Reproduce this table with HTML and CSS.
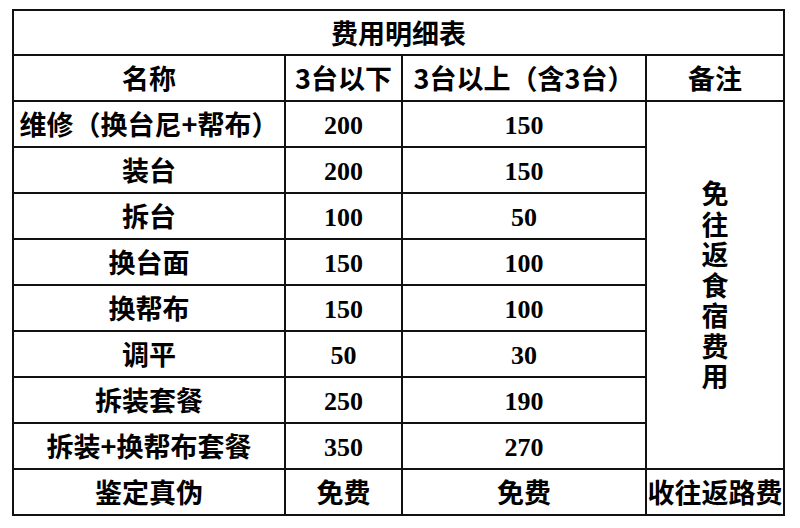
FILE: index.html
```html
<!DOCTYPE html>
<html lang="zh-CN">
<head>
<meta charset="utf-8">
<title>费用明细表</title>
<link rel="stylesheet" href="styles.css">
</head>
<body>
<table class="fee-table">
  <colgroup>
    <col class="c-name">
    <col class="c-low">
    <col class="c-high">
    <col class="c-note">
  </colgroup>
  <tr class="title-row"><td colspan="4">费用明细表</td></tr>
  <tr><td>名称</td><td>3台以下</td><td>3台以上（含3台）</td><td>备注</td></tr>
  <tr><td>维修（换台尼+帮布）</td><td class="num">200</td><td class="num">150</td><td rowspan="8" class="note"><div class="vertical">免往返食宿费用</div></td></tr>
  <tr><td>装台</td><td class="num">200</td><td class="num">150</td></tr>
  <tr><td>拆台</td><td class="num">100</td><td class="num">50</td></tr>
  <tr><td>换台面</td><td class="num">150</td><td class="num">100</td></tr>
  <tr><td>换帮布</td><td class="num">150</td><td class="num">100</td></tr>
  <tr><td>调平</td><td class="num">50</td><td class="num">30</td></tr>
  <tr><td>拆装套餐</td><td class="num">250</td><td class="num">190</td></tr>
  <tr><td>拆装+换帮布套餐</td><td class="num">350</td><td class="num">270</td></tr>
  <tr><td>鉴定真伪</td><td>免费</td><td>免费</td><td>收往返路费</td></tr>
</table>
</body>
</html>
```

FILE: styles.css
```css
html, body {
  margin: 0;
  padding: 0;
  background: #fff;
}

body {
  padding: 9px 0 0 12px;
  font-family: "Noto Sans CJK SC", "Noto Sans", sans-serif;
  font-weight: 700;
  font-size: 27px;
  color: #000;
}

.fee-table {
  border-collapse: collapse;
  table-layout: fixed;
  width: 773px;
}

.c-name { width: 272px; }
.c-low { width: 117px; }
.c-high { width: 244px; }
.c-note { width: 138px; }

.fee-table td {
  border: 2px solid #111;
  padding: 0;
  height: 44px;
  text-align: center;
  vertical-align: middle;
  line-height: 30px;
  white-space: nowrap;
  overflow: hidden;
}

.fee-table .title-row td {
  height: 43px;
}

.fee-table td.num {
  font-family: "Liberation Serif", "DejaVu Serif", serif;
  font-size: 26px;
  padding-top: 4px;
  height: 40px;
}

.fee-table td.note {
  white-space: normal;
}

.vertical {
  width: 1em;
  margin: 0 auto;
  line-height: 30.5px;
  word-break: break-all;
  white-space: normal;
}
```
